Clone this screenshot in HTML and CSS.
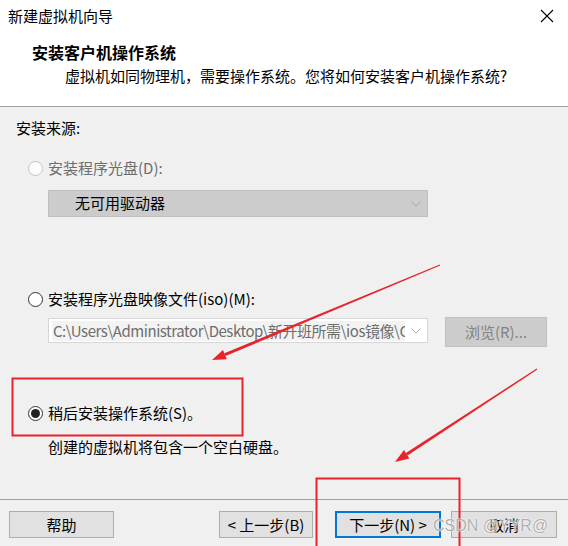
FILE: index.html
```html
<!DOCTYPE html>
<html lang="zh-CN">
<head>
<meta charset="utf-8">
<title>新建虚拟机向导</title>
<link rel="stylesheet" href="styles.css">
</head>
<body>
<div class="window">
  <div class="titlebar">
    <span class="title">新建虚拟机向导</span>
    <svg class="close" width="14" height="14" viewBox="0 0 14 14"><path d="M1 1L13 13M13 1L1 13" stroke="#000" stroke-width="1.1" fill="none"/></svg>
  </div>
  <div class="header">
    <div class="h1">安装客户机操作系统</div>
    <div class="sub">虚拟机如同物理机，需要操作系统。您将如何安装客户机操作系统?</div>
  </div>
  <div class="content">
    <div class="label">安装来源:</div>
    <div class="option disabled opt-disc"><span class="radio"></span><span>安装程序光盘(D):</span></div>
    <div class="select disabled">
      <span class="select-text">无可用驱动器</span>
      <svg class="chev" width="10" height="6" viewBox="0 0 10 6"><path d="M0.5 0.5L5 5L9.5 0.5" stroke="#a8a8a8" fill="none"/></svg>
    </div>
    <div class="option opt-iso"><span class="radio"></span><span>安装程序光盘映像文件(iso)(M):</span></div>
    <div class="iso-row">
      <div class="combo">
        <div class="combo-text">C:\Users\Administrator\Desktop\新开班所需\ios镜像\CentOS-7</div>
        <svg class="chev" width="10" height="6" viewBox="0 0 10 6"><path d="M0.5 0.5L5 5L9.5 0.5" stroke="#a8a8a8" fill="none"/></svg>
      </div>
      <button class="btn btn-disabled browse">浏览(R)...</button>
    </div>
    <div class="option opt-later"><span class="radio checked"></span><span>稍后安装操作系统(S)。</span></div>
    <div class="note">创建的虚拟机将包含一个空白硬盘。</div>
  </div>
  <div class="footer">
    <button class="btn help">帮助</button>
    <button class="btn back">&lt; 上一步(B)</button>
    <button class="btn next">下一步(N) &gt;</button>
    <button class="btn cancel">取消</button>
  </div>
  <svg class="annot" width="568" height="546" viewBox="0 0 568 546">
    <rect x="12.5" y="378.5" width="230" height="57" fill="none" stroke="#e8232a" stroke-width="2"/>
    <rect x="316.5" y="478.5" width="143" height="80" fill="none" stroke="#e8232a" stroke-width="2"/>
    <polygon points="439.77,264.45 440.23,265.55 225.5,356.0 224.3,353.2" fill="#e8232a"/>
    <polygon points="212,360 226.8,359.2 223,350" fill="#e8232a"/>
    <polygon points="536.67,368.5 537.33,369.5 407.5,455.6 405.9,453.0" fill="#e8232a"/>
    <polygon points="395,462 409.4,458.5 404,450.1" fill="#e8232a"/>
  </svg>
  <div class="watermark">CSDN @YYR@</div>
</div>
</body>
</html>
```
FILE: styles.css
```css
* { box-sizing: border-box; }
html, body { margin: 0; padding: 0; }
body {
  font-family: "Noto Sans CJK SC", "Noto Sans", sans-serif;
  font-size: 15px;
  line-height: 20px;
  color: #000;
  background: #f0f0f0;
}
.window {
  position: relative;
  width: 568px;
  height: 546px;
  display: flex;
  flex-direction: column;
  background: #f0f0f0;
  overflow: hidden;
}
.titlebar {
  height: 32px;
  background: #fff;
  display: flex;
  align-items: center;
  justify-content: space-between;
  padding: 0 14px 0 8px;
}
.close { display: block; }
.header {
  background: #fff;
  padding: 10px 0 20px;
  border-bottom: 1px solid #a0a0a0;
}
.h1 {
  font-weight: bold;
  font-size: 16px;
  padding-left: 32px;
}
.sub {
  margin-top: 4px;
  padding-left: 65px;
}
.content {
  flex: 1;
  padding: 11px 0 0 16px;
}
.option {
  display: flex;
  align-items: center;
  margin-left: 12px;
  height: 20px;
}
.radio {
  width: 15px;
  height: 15px;
  border-radius: 50%;
  border: 1px solid #333;
  background: #fff;
  margin-right: 5px;
  display: flex;
  align-items: center;
  justify-content: center;
  flex: none;
}
.radio.checked::after {
  content: "";
  width: 9px;
  height: 9px;
  border-radius: 50%;
  background: #222;
}
.disabled .radio {
  border-color: #c4c4c4;
  background: #fcfcfc;
}
.option.disabled { color: #6d6d6d; }
.opt-disc { margin-top: 20px; }
.select {
  margin: 12px 0 0 32px;
  width: 380px;
  height: 27px;
  background: #cccccc;
  border: 1px solid #bfbfbf;
  display: flex;
  align-items: center;
  justify-content: space-between;
  padding: 0 6px 0 26px;
}
.select-text { margin-top: -2px; }
.chev { display: block; }
.opt-iso { margin-top: 72px; }
.iso-row {
  margin: 8px 0 0 32px;
  display: flex;
  align-items: flex-start;
  gap: 17px;
}
.combo {
  margin-top: 1px;
  width: 380px;
  height: 25px;
  background: #fff;
  border: 1px solid #d6d6d6;
  display: flex;
  align-items: center;
  justify-content: space-between;
  padding: 0 6px 0 3px;
}
.combo-text {
  width: 353px;
  overflow: hidden;
  white-space: nowrap;
  color: #6d6d6d;
  background: #f3f3f3;
  padding-left: 1px;
  letter-spacing: -0.45px;
}
.btn {
  font: inherit;
  color: #000;
  background: #e1e1e1;
  border: 1px solid #adadad;
  padding: 0;
  height: 27px;
  line-height: 20px;
}
.btn-disabled {
  background: #cccccc;
  border-color: #bfbfbf;
  color: #838383;
}
.browse {
  width: 102px;
  height: 30px;
}
.opt-later { margin-top: 56px; }
.note {
  margin: 14px 0 0 32px;
}
.footer {
  height: 47px;
  border-top: 1px solid #a0a0a0;
  display: flex;
  align-items: flex-start;
  padding: 11px 11px 0 9px;
}
.help { width: 105px; }
.back { width: 94px; margin-left: auto; }
.next { width: 106px; margin-left: 22px; border: 2px solid #0078d7; }
.cancel { width: 106px; margin-left: 10px; }
.annot {
  position: absolute;
  left: 0;
  top: 0;
  pointer-events: none;
}
.watermark {
  position: absolute;
  left: 433px;
  top: 516px;
  font-family: "Liberation Sans", sans-serif;
  font-size: 16px;
  line-height: 20px;
  color: rgba(160, 160, 160, 0.85);
  text-shadow: 0 0 2px #fff, 0 0 1px #fff;
  pointer-events: none;
}
```
